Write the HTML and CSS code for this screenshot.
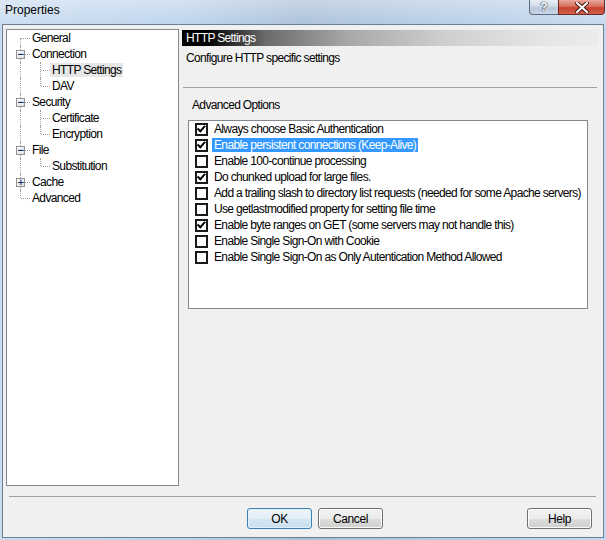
FILE: index.html
```html
<!DOCTYPE html>
<html>
<head>
<meta charset="utf-8">
<title>Properties</title>
<link rel="stylesheet" href="styles.css">
</head>
<body>
<div class="window">
  <div class="titlebar">
    <span class="title">Properties</span>
    <div class="caption-btns">
      <span class="cb cb-help"><span class="q">?</span></span>
      <span class="cb cb-close">
        <svg width="14" height="11" viewBox="0 0 14 11"><path d="M2 1 L12 10 M12 1 L2 10" stroke="#4a1a14" stroke-width="4" stroke-linecap="square"/><path d="M2 1 L12 10 M12 1 L2 10" stroke="#ffffff" stroke-width="2" stroke-linecap="square"/></svg>
      </span>
    </div>
  </div>
  <div class="client">
    <div class="main">
      <div class="tree">
        <div class="trow"><span class="g lf first"></span><span class="tl">General</span></div>
        <div class="trow"><span class="g mid"><span class="exp">−</span></span><span class="tl">Connection</span></div>
        <div class="trow"><span class="g pass"></span><span class="g mid"></span><span class="tl sel">HTTP Settings</span></div>
        <div class="trow"><span class="g pass"></span><span class="g last"></span><span class="tl">DAV</span></div>
        <div class="trow"><span class="g mid"><span class="exp">−</span></span><span class="tl">Security</span></div>
        <div class="trow"><span class="g pass"></span><span class="g mid"></span><span class="tl">Certificate</span></div>
        <div class="trow"><span class="g pass"></span><span class="g last"></span><span class="tl">Encryption</span></div>
        <div class="trow"><span class="g mid"><span class="exp">−</span></span><span class="tl">File</span></div>
        <div class="trow"><span class="g pass"></span><span class="g last"></span><span class="tl">Substitution</span></div>
        <div class="trow"><span class="g mid"><span class="exp">+</span></span><span class="tl">Cache</span></div>
        <div class="trow"><span class="g last"></span><span class="tl">Advanced</span></div>
      </div>
      <div class="pane">
        <div class="pane-header">HTTP Settings</div>
        <div class="pane-desc">Configure HTTP specific settings</div>
        <div class="sep"></div>
        <div class="group-label">Advanced Options</div>
        <div class="list">
          <div class="item"><span class="chk on"></span><span class="lbl">Always choose Basic Authentication</span></div>
          <div class="item"><span class="chk on"></span><span class="lbl hl">Enable persistent connections (Keep-Alive)</span></div>
          <div class="item"><span class="chk"></span><span class="lbl">Enable 100-continue processing</span></div>
          <div class="item"><span class="chk on"></span><span class="lbl">Do chunked upload for large files.</span></div>
          <div class="item"><span class="chk"></span><span class="lbl">Add a trailing slash to directory list requests (needed for some Apache servers)</span></div>
          <div class="item"><span class="chk"></span><span class="lbl">Use getlastmodified property for setting file time</span></div>
          <div class="item"><span class="chk on"></span><span class="lbl">Enable byte ranges on GET (some servers may not handle this)</span></div>
          <div class="item"><span class="chk"></span><span class="lbl">Enable Single Sign-On with Cookie</span></div>
          <div class="item"><span class="chk"></span><span class="lbl">Enable Single Sign-On as Only Autentication Method Allowed</span></div>
        </div>
      </div>
    </div>
    <div class="bottom-sep"></div>
    <div class="buttons">
      <button class="btn default">OK</button>
      <button class="btn">Cancel</button>
      <button class="btn help">Help</button>
    </div>
  </div>
</div>
</body>
</html>
```

FILE: styles.css
```css
html, body {
  margin: 0;
  padding: 0;
}
body {
  width: 606px;
  height: 540px;
  overflow: hidden;
  font-family: "Liberation Sans", Arial, sans-serif;
  font-size: 12px;
  letter-spacing: -0.65px;
  color: #000;
}
.window {
  width: 606px;
  height: 540px;
  background: linear-gradient(to right, #c9dcf0 0%, #bcd3ec 30%, #a9bfd8 50%, #b4cbe4 70%, #c3d8ee 100%);
  display: flex;
  flex-direction: column;
}
.titlebar {
  height: 24px;
  display: flex;
  justify-content: space-between;
  align-items: flex-start;
  background: linear-gradient(to bottom, rgba(255,255,255,0.35), rgba(255,255,255,0.05));
}
.title {
  font-family: "Liberation Sans", sans-serif;
  font-size: 12px;
  letter-spacing: 0;
  line-height: 20px;
  padding-left: 5px;
  color: #000;
}
.caption-btns {
  display: flex;
  margin-right: 1px;
}
.cb {
  height: 15px;
  display: flex;
  align-items: center;
  justify-content: center;
  box-sizing: border-box;
  border: 1px solid #5b6b80;
  border-top: none;
}
.cb-help {
  width: 29px;
  border-right: none;
  border-radius: 0 0 0 4px;
  background: linear-gradient(to bottom, #e6edf5 0%, #d0dbe8 45%, #b9c7d8 55%, #c8d6e6 100%);
}
.q {
  font-family: "Liberation Sans", sans-serif;
  font-weight: bold;
  font-size: 12px;
  letter-spacing: 0;
  color: #fff;
  text-shadow: 0 0 1px #2c3d54, 0 0 1px #2c3d54, 0 0 1px #2c3d54;
  line-height: 12px;
}
.cb-close {
  width: 47px;
  border-color: #6b2a22;
  border-radius: 0 0 4px 0;
  background: linear-gradient(to bottom, #e9a99c 0%, #d7705f 45%, #c7412f 55%, #d0614c 100%);
}
.client {
  margin-left: 2px;
  width: 602px;
  height: 514px;
  box-sizing: border-box;
  border: 1px solid #6e7f93;
  background: #f0f0f0;
  display: flex;
  flex-direction: column;
}
.main {
  display: flex;
  padding: 4px 0 0 3px;
}
.tree {
  width: 173px;
  height: 457px;
  box-sizing: border-box;
  border: 1px solid #828790;
  background: #fff;
  padding-left: 5px;
}
.trow {
  height: 16px;
  display: flex;
  align-items: center;
}
.g {
  width: 20px;
  height: 16px;
  position: relative;
  flex: none;
}
.g::before, .g::after {
  content: "";
  position: absolute;
}
.g.pass::before, .g.mid::before {
  left: 8px; top: 0; height: 16px;
  border-left: 1px dotted #a0a0a0;
}
.g.last::before {
  left: 8px; top: 0; height: 8px;
  border-left: 1px dotted #a0a0a0;
}
.g.first::before {
  left: 8px; top: 8px; height: 8px;
  border-left: 1px dotted #a0a0a0;
}
.g.mid::after, .g.last::after, .g.first::after {
  left: 9px; top: 8px; width: 9px;
  border-top: 1px dotted #a0a0a0;
}
.exp {
  position: absolute;
  left: 4px;
  top: 4px;
  width: 9px;
  height: 9px;
  box-sizing: border-box;
  border: 1px solid #919191;
  background: linear-gradient(to bottom right, #ffffff, #dedede);
  z-index: 1;
  font-family: "DejaVu Sans", sans-serif;
  font-size: 9px;
  letter-spacing: 0;
  line-height: 7px;
  text-align: center;
  color: #1c2f6e;
  font-weight: bold;
}
.tl {
  line-height: 14px;
  padding: 0 2px;
  margin-left: -2px;
  white-space: nowrap;
}
.tl.sel {
  background: #e6e6e6;
}
.pane {
  width: 416px;
  margin-left: 3px;
  padding-top: 1px;
}
.pane-header {
  height: 16px;
  line-height: 16px;
  padding-left: 4px;
  color: #fff;
  background: linear-gradient(to right, #000 0%, #000 6%, #6a6a6a 20%, #a8a8a8 40%, #d0d0d0 64%, #e6e6e6 88%, #ececec 100%);
}
.pane-desc {
  margin-top: 5px;
  line-height: 14px;
  padding-left: 4px;
}
.sep {
  margin-top: 22px;
  margin-left: 1px;
  width: 414px;
  height: 1px;
  background: #a0a0a0;
}
.group-label {
  margin-top: 10px;
  line-height: 14px;
  padding-left: 10px;
}
.list {
  margin-top: 8px;
  margin-left: 6px;
  width: 400px;
  height: 189px;
  box-sizing: border-box;
  border: 1px solid #828790;
  background: #fff;
  padding: 0 0 0 6px;
}
.item {
  height: 16px;
  display: flex;
  align-items: center;
}
.chk {
  width: 13px;
  height: 13px;
  box-sizing: border-box;
  border: 2px solid #1a1a1a;
  background: #fff;
  flex: none;
  position: relative;
}
.chk.on::after {
  content: "";
  position: absolute;
  left: 1px;
  top: 0px;
  width: 6px;
  height: 3px;
  border-left: 2px solid #000;
  border-bottom: 2px solid #000;
  transform: translate(0, 1px) rotate(-48deg);
  transform-origin: 3px 3px;
}
.lbl {
  margin-left: 4px;
  padding: 0 2px;
  line-height: 14px;
  white-space: nowrap;
}
.lbl.hl {
  background: #3399ff;
  color: #fff;
}
.bottom-sep {
  margin-top: 10px;
  margin-left: 6px;
  width: 587px;
  height: 1px;
  background: #a0a0a0;
}
.buttons {
  margin-top: 11px;
  display: flex;
  padding: 0 11px 0 244px;
  gap: 6px;
}
.btn {
  width: 65px;
  height: 21px;
  box-sizing: border-box;
  border: 1px solid #707070;
  border-radius: 3px;
  background: linear-gradient(to bottom, #f2f2f2 0%, #ebebeb 50%, #dddddd 51%, #cfcfcf 100%);
  font-family: inherit;
  font-size: 12px;
  letter-spacing: -0.4px;
  color: #000;
  padding: 0;
  box-shadow: inset 0 0 0 1px #fcfcfc;
}
.btn.default {
  border-color: #3c7fb1;
  box-shadow: inset 0 0 0 1px #dff0fa;
  background: linear-gradient(to bottom, #eef5fa 0%, #e3eef6 50%, #d4e6f2 51%, #c9dfee 100%);
}
.btn.help {
  margin-left: auto;
}
```
